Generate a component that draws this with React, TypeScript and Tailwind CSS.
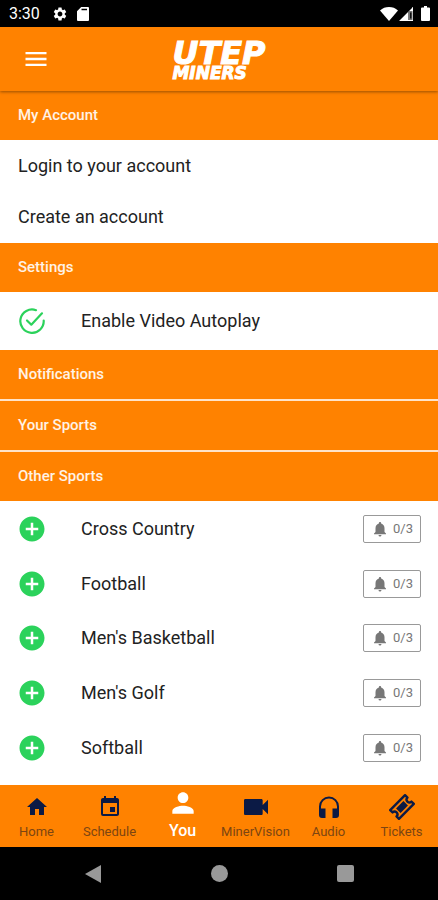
import type { ReactNode } from "react";
import {
  MdAddCircle,
  MdEvent,
  MdHome,
  MdMenu,
  MdNotifications,
  MdPerson,
  MdSettings,
  MdVideocam,
} from "react-icons/md";

const sports = ["Cross Country", "Football", "Men's Basketball", "Men's Golf", "Softball"];

function StatusBar() {
  return (
    <div className="flex h-[27px] items-center justify-between bg-black pr-2 pl-[9px] text-white">
      <div className="flex items-center">
        <span className="w-[43px] text-base leading-6">3:30</span>
        <MdSettings className="size-4" />
        <svg viewBox="0 0 12 14" className="ml-[9px] h-[14px] w-3" fill="currentColor">
          <path
            fillRule="evenodd"
            d="M4.200 0H11a1 1 0 0 1 1 1v12a1 1 0 0 1-1 1H1a1 1 0 0 1-1-1V4.200ZM4.500 1.800v1.400H10V1.800Z"
          />
        </svg>
      </div>
      <div className="flex items-center">
        <svg viewBox="0 0 18 14" className="h-[14px] w-[18px]" fill="currentColor">
          <path d="M9 14 0 3.400C2.500 1.200 5.600 0 9 0s6.500 1.200 9 3.400Z" />
        </svg>
        <svg viewBox="0 0 15 14" className="ml-px h-[14px] w-[15px]" fill="currentColor">
          <path d="M0 14 14 0v4H9.500v10Z" />
          <path d="M9.500 4H14v10H9.500Z" fill="#777" />
          <path d="M11 5.500h1.500v6H11Z" fill="#111" />
          <path d="M13.500 0H14v14h-.5ZM9 13h5v1H9Z" />
        </svg>
        <svg viewBox="0 0 9 15" className="ml-[7px] h-[15px] w-[9px]" fill="currentColor">
          <path d="M3 0h3v1.500h2a1 1 0 0 1 1 1V14a1 1 0 0 1-1 1H1a1 1 0 0 1-1-1V2.500a1 1 0 0 1 1-1h2Z" />
        </svg>
      </div>
    </div>
  );
}

function SectionHeader({ children, divided = false }: { children: ReactNode; divided?: boolean }) {
  return (
    <h2
      className={
        "box-content flex h-[49px] items-center bg-[#ff8200] px-[18px] text-[15px] leading-6 font-medium text-white/90" +
        (divided ? " border-b-2 border-[#ffe3c8]" : "")
      }
    >
      <span className="pb-0.5">{children}</span>
    </h2>
  );
}

function HeadphonesIcon() {
  return (
    <svg viewBox="0 0 22 24" className="h-6 w-[22px]" fill="currentColor">
      <path
        d="M2 19v-7.500a9 9 0 0 1 18 0V19"
        fill="none"
        stroke="currentColor"
        strokeWidth="2"
      />
      <path d="M1 13.500h6.500V23H4a3 3 0 0 1-3-3ZM14.500 13.500H21V20a3 3 0 0 1-3 3h-3.500Z" />
    </svg>
  );
}

function TicketIcon() {
  return (
    <svg viewBox="0 0 26 26" className="size-[26px]" fill="none" stroke="currentColor">
      <g transform="rotate(-45 13 13)">
        <path
          strokeWidth="2.400"
          strokeLinejoin="round"
          d="M2.500 6.800h21v3.400a2.800 2.800 0 0 0 0 5.600v3.400h-21v-3.400a2.800 2.800 0 0 0 0-5.600Z"
        />
        <path fill="currentColor" stroke="none" d="M7.800 9.800h10.400v6.400H7.800Z" />
      </g>
    </svg>
  );
}

const tabs = [
  { label: "Home", icon: <MdHome className="size-6" /> },
  { label: "Schedule", icon: <MdEvent className="size-6" /> },
  { label: "You", icon: <MdPerson className="size-8" />, active: true },
  { label: "MinerVision", icon: <MdVideocam className="size-8" /> },
  { label: "Audio", icon: <HeadphonesIcon /> },
  { label: "Tickets", icon: <TicketIcon /> },
];

export default function App() {
  return (
    <div className="flex min-h-screen flex-col bg-white font-['Roboto',sans-serif] text-[#222]">
      <StatusBar />
      <header className="relative grid h-16 grid-cols-[1fr_auto_1fr] items-center bg-[#ff8200] px-[22px] text-white shadow-[0_1px_3px_rgba(0,0,0,0.4)]">
        <button aria-label="Open menu" className="justify-self-start">
          <MdMenu className="size-7" />
        </button>
        <h1 className="flex flex-col pt-1 font-['DejaVu_Sans',sans-serif] font-bold italic [-webkit-text-stroke:1px_white]">
          <span className="text-[32px] leading-6">UTEP</span>
          <span className="text-[17px] leading-4">MINERS</span>
        </h1>
      </header>

      <main className="flex-1">
        <SectionHeader>My Account</SectionHeader>
        <div className="pb-px">
          <a href="#login" className="flex h-[51px] items-center px-[18px] text-lg">
            Login to your account
          </a>
          <a href="#create" className="flex h-[51px] items-center px-[18px] text-lg">
            Create an account
          </a>
        </div>
        <SectionHeader>Settings</SectionHeader>
        <label className="flex h-[58px] items-center px-[19px] text-lg">
          <input type="checkbox" defaultChecked className="peer sr-only" />
          <svg
            viewBox="0 0 26 26"
            className="mr-9 size-[26px] text-[#2bd25b]"
            fill="none"
            stroke="currentColor"
            strokeWidth="2.200"
            strokeLinecap="round"
            strokeLinejoin="round"
          >
            <path d="M17 2.200A11.700 11.700 0 1 0 24.700 12.500" />
            <path d="m8 12.500 4.300 4.200L23 5.300" />
          </svg>
          Enable Video Autoplay
        </label>
        <SectionHeader divided>Notifications</SectionHeader>
        <SectionHeader divided>Your Sports</SectionHeader>
        <SectionHeader>Other Sports</SectionHeader>
        <ul className="grid h-[274px] auto-rows-fr pt-px">
          {sports.map((sport) => (
            <li key={sport} className="flex items-center px-[17px] text-lg">
              <button aria-label={"Add " + sport} className="mr-[34px] text-[#2bd25b]">
                <MdAddCircle className="size-[30px]" />
              </button>
              <span className="flex-1">{sport}</span>
              <button
                aria-label={sport + " notifications, 0 of 3"}
                className="flex h-7 w-[58px] items-center justify-center gap-1 rounded-xs border border-[#999] text-[13px] text-[#777]"
              >
                <MdNotifications className="size-[18px]" />
                0/3
              </button>
            </li>
          ))}
        </ul>
      </main>

      <nav className="grid h-[62px] grid-cols-6 bg-[#ff8200]">
        {tabs.map((tab) => (
          <a
            key={tab.label}
            href={"#" + tab.label.toLowerCase()}
            className={
              tab.active
                ? "flex flex-col items-center text-base leading-5 font-medium text-white"
                : "flex flex-col items-center text-[13px] leading-[22px] text-[#7c4512]"
            }
          >
            <span
              className={
                tab.active
                  ? "flex h-9 items-center justify-center"
                  : "flex h-9 items-center justify-center pt-2 text-[#0b1a45]"
              }
            >
              {tab.icon}
            </span>
            {tab.label}
          </a>
        ))}
      </nav>

      <div className="flex h-[53px] items-center justify-center gap-[109px] bg-black text-[#999]">
        <button aria-label="Back">
          <svg viewBox="0 0 18 18" className="size-[18px]" fill="currentColor">
            <path d="M17 0v18L1 9Z" />
          </svg>
        </button>
        <button aria-label="Home screen" className="size-[17px] rounded-full bg-[#999]" />
        <button aria-label="Recent apps" className="size-[17px] rounded-xs bg-[#999]" />
      </div>
    </div>
  );
}
